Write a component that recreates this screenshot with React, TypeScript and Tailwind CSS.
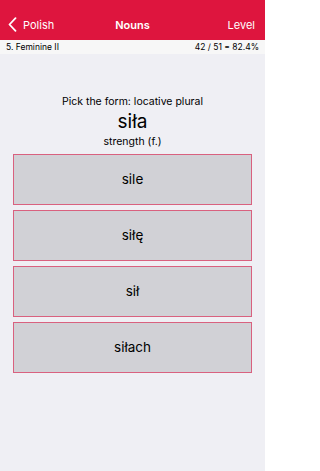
const options = ['sile', 'siłę', 'sił', 'siłach'];

function BackChevron() {
  return (
    <svg width="9" height="15" viewBox="0 0 9 15" fill="none" className="shrink-0">
      <path d="M7.5 1.2L1.5 7.5l6 6.3" stroke="currentColor" strokeWidth="1.8" strokeLinecap="round" strokeLinejoin="round" />
    </svg>
  );
}

export default function App() {
  return (
    <div className="flex h-[471px] w-[265px] flex-col bg-[#efeff4] font-['Inter',sans-serif] text-black">
      <header className="flex h-[40px] items-end bg-[#de153e] pb-[7px] text-white">
        <div className="flex w-1/3 items-center pl-[8px]">
          <BackChevron />
          <span className="ml-[6px] text-[11px]">Polish</span>
        </div>
        <div className="w-1/3 text-center text-[11px] font-semibold">Nouns</div>
        <div className="w-1/3 pr-[10px] text-right text-[11px]">Level</div>
      </header>

      <div className="flex h-[14px] items-center justify-between bg-[#f7f7f7] px-[6px] text-[8.5px]">
        <span>5. Feminine II</span>
        <span>42 / 51 = 82.4%</span>
      </div>

      <main className="flex flex-col items-center pt-[41px]">
        <p className="text-[10.5px] leading-[14px]">Pick the form: locative plural</p>
        <p className="text-[19px] leading-[26px]">siła</p>
        <p className="text-[10.5px] leading-[14px]">strength (f.)</p>

        <ul className="mt-[5px] flex w-[239px] flex-col gap-[5px]">
          {options.map((option) => (
            <li key={option}>
              <button className="flex h-[51px] w-full items-center justify-center border border-[#d9617f] bg-[#d1d1d6] text-[13.5px]">
                {option}
              </button>
            </li>
          ))}
        </ul>
      </main>
    </div>
  );
}
